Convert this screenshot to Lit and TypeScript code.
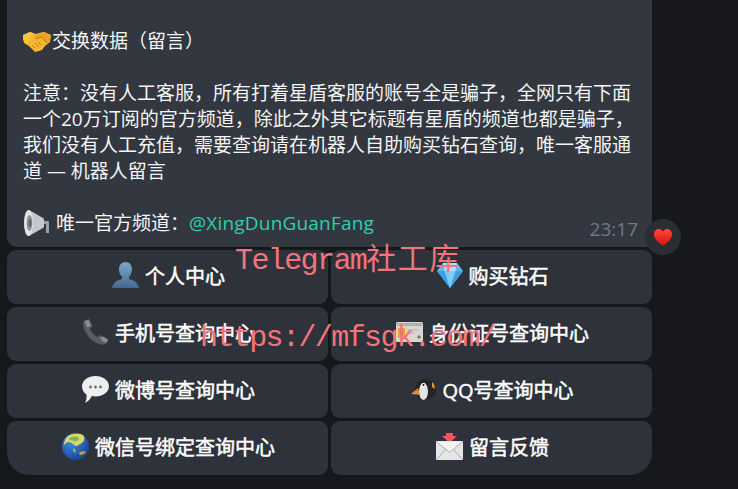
import { LitElement, html, css, svg } from "lit";
import { customElement } from "lit/decorators.js";

const icons = {
  handshake: svg`<svg class="emoji" style="width:28px;height:22px" viewBox="0 0 28 22">
    <path d="M0 5 7 2l6 2 3-1 5-1 7 3-1 7-5 4-3 4-3 1-4 1-3-3-3-3-5-3z" fill="#f5b731"/>
    <path d="M0 5 7 2l3 1-5 9-2 1-3-3z" fill="#f7c43f"/>
    <path d="M28 5l-7-3-4 1-5 4 2 2 4-2 6 6 3-3z" fill="#e9a221"/>
    <path d="M12 7l2 2 4-2 6 6M9 15l3 3M12 13l4 4M15 12l3 3" fill="none" stroke="#c47f12" stroke-width="1"/>
  </svg>`,
  megaphone: svg`<svg class="emoji" style="width:27px;height:28px" viewBox="0 0 27 28">
    <path d="M19 12h6a1.500 1.500 0 0 1 1 1v11h-3v-9h-4z" fill="#8fa3b3"/>
    <path d="M6 1 20 9a2 2 0 0 1 1 2v6a2 2 0 0 1-1 2L6 27z" fill="#c4c8cc"/>
    <ellipse cx="5.500" cy="14" rx="4.500" ry="13" fill="#e4e5e6"/>
    <ellipse cx="6.500" cy="14" rx="2.800" ry="8" fill="#8d9195"/>
    <ellipse cx="7" cy="14" rx="1.500" ry="4" fill="#63676b"/>
  </svg>`,
  heart: svg`<svg class="emoji" style="width:18px;height:17px" viewBox="0 0 18 17">
    <defs><linearGradient id="h" x1="0" y1="0" x2="0" y2="1"><stop offset="0" stop-color="#ff4a38"/><stop offset="1" stop-color="#d80f0f"/></linearGradient></defs>
    <path d="M9 17C4 13 0 10 0 5.200 0 2.200 2.200 0 4.800 0 6.600 0 8.100.9 9 2.500 9.900.9 11.400 0 13.200 0 15.800 0 18 2.200 18 5.200 18 10 14 13 9 17z" fill="url(#h)"/>
  </svg>`,
  bust: svg`<svg class="emoji" style="width:27px;height:26px" viewBox="0 0 27 26">
    <defs><linearGradient id="b" x1="0" y1="0" x2="0" y2="1"><stop offset="0" stop-color="#7ba7c9"/><stop offset="1" stop-color="#44688f"/></linearGradient></defs>
    <path d="M13.500 0c4 0 6.500 3 6.500 7.500 0 3-1.200 5.800-3 7.200v2.300c4 1.200 9 2.800 10 9H0c1-6.200 6-7.800 10-9v-2.300C8.200 13.300 7 10.500 7 7.500 7 3 9.500 0 13.500 0z" fill="url(#b)"/>
  </svg>`,
  phone: svg`<svg class="emoji" style="width:27px;height:26px" viewBox="0 0 27 26">
    <path d="M2 1.500 7 0l3.500 7-2.500 3c1.500 3.500 4 6 7.500 8l3-2 7 4.500-1.500 4.500C21 27 12 24.500 6.500 17.500 2 12 0 6 2 1.500z" fill="#5a5d60"/>
    <path d="M3 2 6.500 1 9 6.500 5.500 8.500C4 6 3 4 3 2zM18 19l3-1.500 5 3-1 3c-3 0-5.500-1.500-7-4.500z" fill="#8b8e91"/>
  </svg>`,
  gem: svg`<svg class="emoji" style="width:26px;height:25px" viewBox="0 0 26 25">
    <path d="M6 0h14l6 8-13 17L0 8z" fill="#5cb8f0"/>
    <path d="M0 8h26L13 25z" fill="#3d9fe4"/>
    <path d="M7.500 8h11L13 25z" fill="#7dcdf7"/>
    <path d="M6 0l1.500 8h11L20 0z" fill="#a9e0fa"/>
  </svg>`,
  card: svg`<svg class="emoji" style="width:27px;height:20px" viewBox="0 0 27 20">
    <rect width="27" height="20" rx="1.500" fill="#d9d6d0"/>
    <rect x="1" y="1" width="25" height="3" fill="#aeb0ae"/>
    <rect x="2" y="6" width="7" height="10" fill="#e0a82e"/>
    <rect x="4" y="8" width="3" height="4" fill="#b98017"/>
    <path d="M11 8h12M11 11h8" stroke="#b5b5b2" stroke-width="1"/>
    <circle cx="23" cy="15" r="1.800" fill="#77797b"/>
  </svg>`,
  speech: svg`<svg class="emoji" style="width:27px;height:27px" viewBox="0 0 27 27">
    <path d="M13.500 0C21 0 27 4.600 27 10.300S21 20.500 13.500 20.500c-1.300 0-2.600-.1-3.800-.4C8.500 23 6.500 25.500 3 27c1.200-2.500 1.800-5 1.500-8.500C1.700 16.700 0 13.700 0 10.300 0 4.600 6 0 13.500 0z" fill="#eeeeee"/>
    <circle cx="8.500" cy="11" r="1.400" fill="#6d6d6d"/><circle cx="13.500" cy="11" r="1.400" fill="#6d6d6d"/><circle cx="18.500" cy="11" r="1.400" fill="#6d6d6d"/>
  </svg>`,
  penguin: svg`<svg class="emoji" style="width:25px;height:21px" viewBox="0 0 25 21">
    <circle cx="14.500" cy="10.500" r="10.500" fill="#242424"/>
    <ellipse cx="12.500" cy="12.500" rx="4.500" ry="8.500" fill="#e4e4e4"/>
    <path d="M21 3c2 1.500 3 4 2.500 7L21 8z" fill="#eda21f"/>
    <circle cx="12.500" cy="6" r="2" fill="#fff"/><circle cx="12.500" cy="6" r="1" fill="#111"/>
    <path d="M0 15l7-6 2 7z" fill="#e08a35"/>
  </svg>`,
  globe: svg`<svg class="emoji" style="width:27px;height:27px" viewBox="0 0 27 27">
    <defs><radialGradient id="g" cx=".35" cy=".3" r=".8"><stop offset="0" stop-color="#3f8fe0"/><stop offset="1" stop-color="#123f91"/></radialGradient></defs>
    <circle cx="13.500" cy="13.500" r="13.500" fill="url(#g)"/>
    <path d="M4 5C8 0 17 0 21 2c2 3 2 5-1 8-3 1-4 3-6 3-3-1-4-4-7-4-2 0-3 1-5 3 0-3 1-5 2-7z" fill="#d8d86a"/>
    <path d="M7 6c3-3 8-3 10-1 0 2-3 4-5 3S8 8 7 6z" fill="#7fb356"/>
    <path d="M17 20c2-2 5-2 7-1-1 2-4 3-6 3z" fill="#c89a43"/>
    <path d="M11 15l3 2-1 3-2-2z" fill="#8fb85c"/>
  </svg>`,
  envelope: svg`<svg class="emoji" style="width:27px;height:27px" viewBox="0 0 27 27">
    <path d="M10 0h7v3h4l-7.500 7L6 3h4z" fill="#f0585b"/>
    <rect y="8" width="27" height="19" rx="1" fill="#e6e6e6"/>
    <path d="M0 9l13.500 11L27 9" fill="#f3f3f3"/>
    <path d="M.5 9l13 10.500L26.500 9M.5 26.500l9-10M26.500 26.500l-9-10" fill="none" stroke="#a9a9a9"/>
  </svg>`,
};

const buttons = [
  { icon: icons.bust, label: "个人中心" },
  { icon: icons.gem, label: "购买钻石" },
  { icon: icons.phone, label: "手机号查询中心" },
  { icon: icons.card, label: "身份证号查询中心" },
  { icon: icons.speech, label: "微博号查询中心" },
  { icon: icons.penguin, label: "QQ号查询中心" },
  { icon: icons.globe, label: "微信号绑定查询中心" },
  { icon: icons.envelope, label: "留言反馈" },
];

// full width punctuation
const COMMA = "\uFF0C";
const COLON = "\uFF1A";

const title = "交换数据\uFF08留言\uFF09";
const lines = [
  `注意${COLON}没有人工客服${COMMA}所有打着星盾客服的账号全是骗子${COMMA}全网只有下面`,
  `一个20万订阅的官方频道${COMMA}除此之外其它标题有星盾的频道也都是骗子${COMMA}`,
  `我们没有人工充值${COMMA}需要查询请在机器人自助购买钻石查询${COMMA}唯一客服通`,
  "道 — 机器人留言",
];

@customElement("app-root")
export class AppRoot extends LitElement {
  static override styles = css`
    :host {
      display: block;
      position: relative;
      width: 738px;
      height: 489px;
      overflow: hidden;
      background: #17181c;
      font-family: "Open Sans", "Noto Sans CJK SC", sans-serif;
      color: #f4f5f6;
    }

    .message {
      width: 645px;
      margin-left: 7px;
      display: flex;
      flex-direction: column;
      gap: 3px;
    }

    .bubble {
      height: 247px;
      box-sizing: border-box;
      padding: 28px 14px 0 16px;
      background: #33373f;
      border-radius: 0 0 4px 10px;
      font-size: 19px;
      line-height: 26px;
    }
    .bubble div {
      white-space: nowrap;
      height: 26px;
    }
    .title,
    .channel {
      display: flex;
      align-items: center;
    }
    .title .emoji {
      margin-right: 1px;
    }
    .channel {
      gap: 6px;
    }
    .link {
      color: #2dcfb3;
      letter-spacing: 0.2px;
    }
    .time {
      margin-left: auto;
      margin-top: 12px;
      color: #6f7c88;
    }

    .keyboard {
      display: grid;
      grid-template-columns: 1fr 1fr;
      grid-auto-rows: 54px;
      gap: 3px;
    }
    .key {
      display: flex;
      align-items: center;
      justify-content: center;
      gap: 6px;
      box-sizing: border-box;
      padding: 0 0 4px 2px;
      background: #2e323a;
      border-radius: 9px;
      color: #fff;
      font-size: 20px;
      -webkit-text-stroke: 0.5px #fff;
    }
    .key:nth-child(7) {
      border-bottom-left-radius: 22px;
    }
    .key:nth-child(8) {
      border-bottom-right-radius: 22px;
    }

    .reaction {
      position: absolute;
      left: 645px;
      top: 219px;
      width: 36px;
      height: 36px;
      display: flex;
      align-items: center;
      justify-content: center;
      border-radius: 50%;
      background: #2a2d34;
    }
    .emoji {
      flex: none;
      display: block;
    }

    .mark {
      position: absolute;
      white-space: nowrap;
      pointer-events: none;
      color: #f4747a;
      font-family: "Liberation Mono", "Noto Sans CJK SC", monospace;
      font-size: 30px;
      line-height: 36px;
      letter-spacing: -1.6px;
    }
    .mark.name {
      left: 235px;
      top: 243px;
    }
    .mark.url {
      left: 200px;
      top: 320px;
    }
    .cjk {
      letter-spacing: 1.6px;
    }
  `;

  override render() {
    return html`
      <div class="message">
        <div class="bubble">
          <div class="title">${icons.handshake}<span>${title}</span></div>
          <div></div>
          ${lines.map((line) => html`<div>${line}</div>`)}
          <div></div>
          <div class="channel">
            ${icons.megaphone}
            <span>唯一官方频道${COLON}<span class="link">@XingDunGuanFang</span></span>
            <span class="time">23:17</span>
          </div>
        </div>
        <div class="keyboard">
          ${buttons.map((b) => html`<div class="key">${b.icon}<span>${b.label}</span></div>`)}
        </div>
      </div>
      <div class="reaction">${icons.heart}</div>
      <div class="mark name">Telegram<span class="cjk">社工库</span></div>
      <div class="mark url">https://mfsgk.com/</div>
    `;
  }
}

declare global {
  interface HTMLElementTagNameMap {
    "app-root": AppRoot;
  }
}
